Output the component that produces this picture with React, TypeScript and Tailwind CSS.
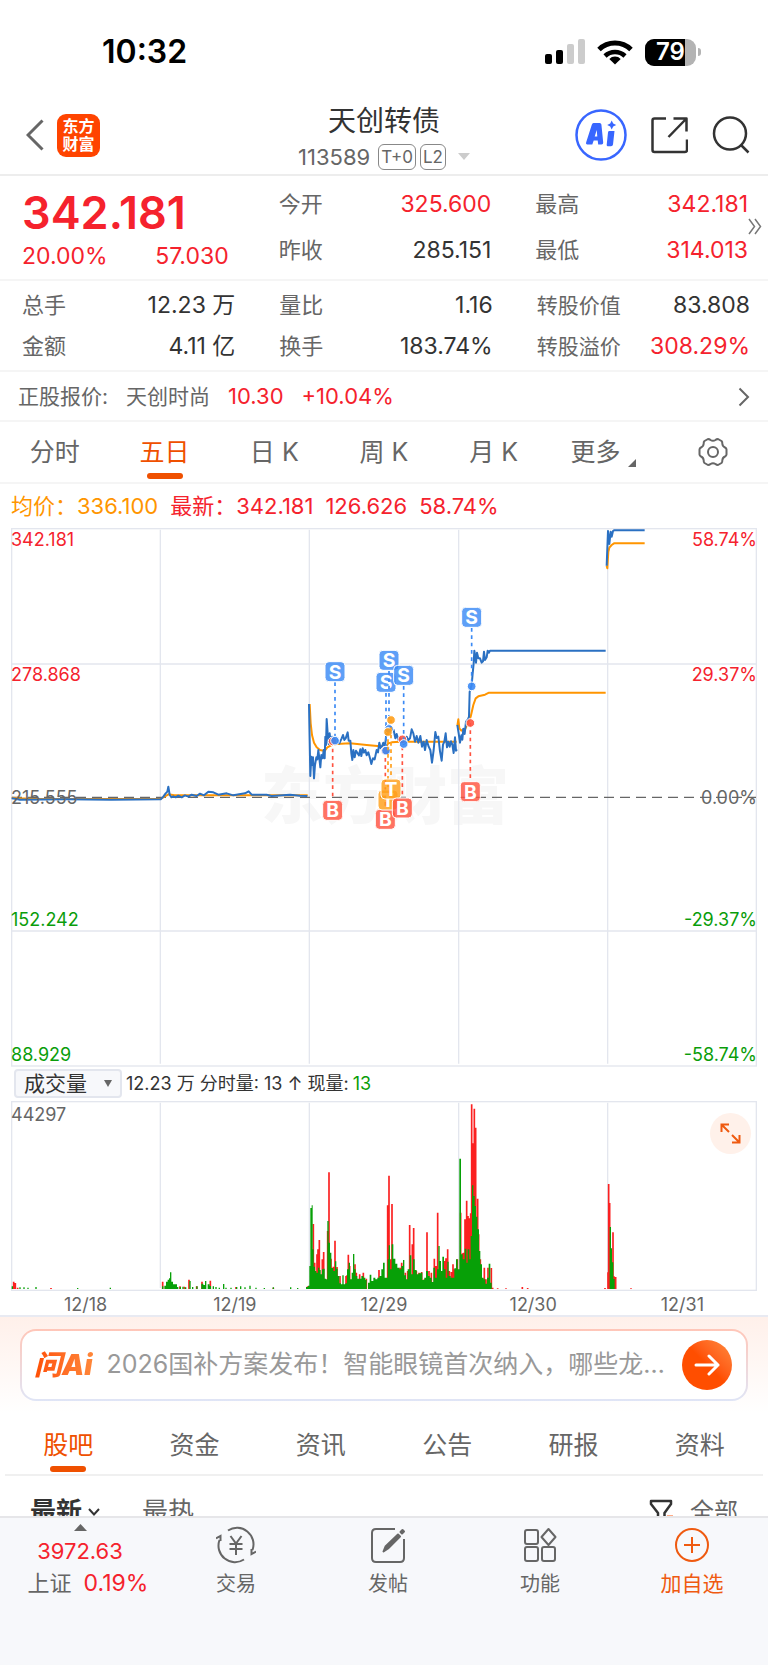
import React, { useState } from 'react';

interface Quote {
  label: string;
  value: string;
  up?: boolean;
}

interface Marker {
  kind: 'S' | 'B' | 'T';
  x: number;
  y: number;
  dotY: number;
}

type Point = [number, number];

const topQuotes: Quote[] = [
  { label: '今开', value: '325.600', up: true },
  { label: '最高', value: '342.181', up: true },
  { label: '昨收', value: '285.151' },
  { label: '最低', value: '314.013', up: true },
];

const moreQuotes: Quote[] = [
  { label: '总手', value: '12.23 万' },
  { label: '量比', value: '1.16' },
  { label: '转股价值', value: '83.808' },
  { label: '金额', value: '4.11 亿' },
  { label: '换手', value: '183.74%' },
  { label: '转股溢价', value: '308.29%', up: true },
];

const periods = ['分时', '五日', '日 K', '周 K', '月 K', '更多'];
const sections = ['股吧', '资金', '资讯', '公告', '研报', '资料'];
const dates = ['12/18', '12/19', '12/29', '12/30', '12/31'];

const scaleLabels = [
  { price: '342.181', percent: '58.74%', className: 'top-0 text-[#f5222d]' },
  { price: '278.868', percent: '29.37%', className: 'top-[25%] text-[#f5222d]' },
  { price: '215.555', percent: '0.00%', className: 'top-1/2 -translate-y-1/2 text-[#666]' },
  { price: '152.242', percent: '-29.37%', className: 'bottom-[25%] text-[#0a9d0a]' },
  { price: '88.929', percent: '-58.74%', className: 'bottom-0 text-[#0a9d0a]' },
];

// one polyline per trading day, in chart units (three per pixel)
const priceLines = [
  '2,811 12,812 27,815 167,814 300,815 449,814 457,806 464,796 469,791 472,776 476,800 481,808 487,805 494,808 502,803 512,808 522,802 532,806 542,800 557,804 567,797 579,802 592,791 607,793 622,800 647,796 667,802 702,796 713,790 722,800 767,800 782,804 837,800 867,803 889,804',
  '894,528 896,636 898,744 901,686 904,711 906,688 909,751 912,711 916,688 919,694 922,666 925,691 928,718 931,681 935,691 938,666 941,691 943,626 945,651 947,573 950,616 953,648 956,616 959,644 963,626 966,648 970,631 974,644 978,636 985,646 992,631 996,621 1000,636 1004,631 1010,613 1013,638 1018,638 1021,676 1024,696 1027,666 1031,688 1035,668 1040,676 1044,682 1048,664 1051,684 1055,661 1059,674 1063,666 1067,682 1072,673 1077,691 1081,708 1086,691 1091,694 1097,666 1101,673 1105,644 1109,661 1113,656 1117,644 1121,666 1125,626 1129,616 1135,601 1139,596 1143,611 1148,606 1153,631 1157,618 1162,636 1167,631 1173,636 1178,648 1183,644 1187,626 1192,636 1197,631 1202,604 1207,616 1212,641 1217,624 1222,644 1228,624 1233,656 1238,641 1242,666 1247,636 1253,656 1258,666 1263,704 1268,666 1273,612 1277,630 1282,626 1287,670 1292,698 1296,650 1300,641 1304,616 1308,658 1312,641 1316,656 1320,640 1324,650 1328,675 1332,628 1335,668 1338,664',
  '1339,591 1343,616 1347,644 1351,622 1354,635 1357,602 1361,618 1365,581 1371,574 1374,566 1376,491 1379,481 1382,471 1385,436 1388,406 1390,368 1393,386 1395,404 1398,374 1402,391 1407,391 1412,404 1416,400 1419,371 1422,396 1427,388 1430,368 1434,374 1437,368 1784,368',
  '1787,113 1791,9 1795,48 1799,11 1802,26 1806,9 1809,7 1901,7',
];

const averageLines = [
  '2,809 27,811 67,813 449,813 472,799 490,802 890,802',
  '896,528 899,586 903,621 909,644 917,658 927,666 941,669 949,658 962,651 977,648 1017,646 1067,651 1107,655 1127,654 1132,646 1142,643 1167,641 1337,641',
  '1339,594 1342,574 1345,601 1351,608 1362,604 1371,586 1379,566 1387,531 1394,511 1402,505 1422,500 1434,494 1784,494',
  '1787,113 1789,121 1792,71 1795,59 1802,51 1809,46 1901,46',
];

const markers: Marker[] = [
  { kind: 'B', x: 965, y: 847, dotY: 640 },
  { kind: 'S', x: 972, y: 431, dotY: 638 },
  { kind: 'B', x: 1123, y: 874, dotY: 668 },
  { kind: 'S', x: 1125, y: 463, dotY: 668 },
  { kind: 'S', x: 1134, y: 397, dotY: 603 },
  { kind: 'T', x: 1131, y: 816, dotY: 612 },
  { kind: 'T', x: 1140, y: 783, dotY: 576 },
  { kind: 'B', x: 1174, y: 840, dotY: 634 },
  { kind: 'S', x: 1178, y: 442, dotY: 648 },
  { kind: 'S', x: 1382, y: 268, dotY: 475 },
  { kind: 'B', x: 1378, y: 791, dotY: 585 },
];

const markerColors = { S: '#3b8af5', B: '#ff5340', T: '#ff9f1a' };

// [x, height] pairs of the minute volume bars
const greenBars: Point[] = [
  [4, 8], [27, 5], [39, 5], [51, 4], [75, 6], [200, 3], [298, 4], [455, 8], [462, 10], [467, 22], [472, 28], [476, 32], [479, 50], [483, 22],
  [488, 14], [494, 14], [500, 6], [508, 6], [516, 7], [524, 5], [537, 24], [545, 6], [558, 8], [573, 16], [579, 12], [584, 24], [592, 14],
  [598, 9], [607, 8], [615, 6], [625, 4], [638, 15], [645, 4], [660, 4], [677, 6], [689, 8], [702, 5], [717, 10], [735, 4], [760, 3], [787, 5],
  [839, 5], [860, 3], [887, 6], [893, 10], [897, 69], [900, 243], [904, 251], [907, 119], [910, 67], [914, 54], [918, 49], [923, 64], [927, 57],
  [931, 44], [935, 59], [939, 61], [943, 31], [947, 29], [951, 204], [955, 139], [959, 109], [963, 63], [969, 54], [974, 83], [978, 61],
  [982, 39], [987, 17], [992, 14], [996, 41], [1000, 14], [1005, 17], [1010, 59], [1015, 79], [1019, 29], [1024, 49], [1028, 105], [1032, 59],
  [1036, 39], [1041, 31], [1047, 31], [1053, 39], [1059, 34], [1065, 27], [1073, 19], [1078, 43], [1083, 24], [1089, 34], [1095, 29],
  [1101, 34], [1107, 39], [1113, 59], [1118, 79], [1123, 34], [1128, 34], [1132, 89], [1135, 131], [1139, 59], [1144, 134], [1149, 91],
  [1155, 76], [1161, 64], [1167, 59], [1173, 69], [1178, 87], [1182, 41], [1187, 29], [1192, 59], [1198, 101], [1203, 44], [1208, 89],
  [1213, 57], [1219, 44], [1225, 47], [1231, 49], [1236, 27], [1242, 34], [1247, 54], [1253, 39], [1258, 34], [1264, 21], [1269, 64],
  [1274, 34], [1280, 59], [1284, 129], [1288, 84], [1292, 54], [1296, 97], [1301, 59], [1306, 34], [1311, 82], [1315, 39], [1321, 34],
  [1327, 34], [1332, 62], [1337, 89], [1342, 59], [1347, 391], [1352, 104], [1357, 89], [1363, 121], [1368, 79], [1372, 119], [1377, 89],
  [1381, 159], [1385, 311], [1389, 279], [1393, 249], [1397, 217], [1401, 179], [1406, 114], [1410, 74], [1415, 34], [1420, 29],
  [1425, 16], [1430, 34], [1435, 76], [1440, 19], [1798, 186], [1802, 122], [1805, 80], [1809, 30],
];

const redBars: Point[] = [
  [8, 22], [13, 18], [20, 4], [120, 3], [455, 22], [507, 8], [520, 7], [534, 28], [557, 8], [573, 22], [598, 25], [675, 6], [787, 4], [890, 8],
  [907, 195], [911, 79], [918, 104], [921, 119], [925, 147], [934, 89], [938, 111], [950, 174], [954, 350], [960, 91], [967, 67],
  [972, 145], [978, 66], [987, 39], [1005, 39], [1008, 41], [1012, 103], [1016, 69], [1032, 74], [1036, 49], [1046, 44], [1057, 49],
  [1066, 31], [1104, 57], [1110, 39], [1130, 251], [1134, 340], [1139, 89], [1143, 255], [1161, 54], [1167, 64], [1172, 79], [1183, 49],
  [1190, 54], [1196, 192], [1204, 134], [1208, 183], [1216, 54], [1224, 49], [1232, 51], [1240, 29], [1248, 170], [1254, 54], [1261, 49],
  [1270, 91], [1275, 69], [1280, 229], [1300, 84], [1305, 92], [1310, 119], [1315, 54], [1321, 51], [1326, 74], [1331, 59], [1339, 89],
  [1349, 229], [1355, 107], [1358, 109], [1362, 209], [1367, 265], [1371, 219], [1375, 212], [1379, 227], [1382, 554], [1385, 437],
  [1390, 541], [1394, 484], [1400, 271], [1403, 164], [1408, 89], [1420, 64], [1425, 29], [1431, 64], [1441, 63], [1445, 4], [1460, 2],
  [1485, 2], [1534, 6], [1550, 3], [1782, 3], [1791, 50], [1793, 315], [1796, 258], [1806, 170], [1809, 38], [1814, 36], [1860, 2],
];

const toBars = (bars: Point[]) => bars.map(([x, h]) => `M${x} 564v-${h}`).join('');

// the green bars sit edge to edge, so fill each one up to its neighbour
const toArea = (bars: Point[]) =>
  bars
    .map(([x, h], i) => {
      const next = bars[i + 1];
      const width = next && next[0] - x <= 6 ? next[0] - x : 4;
      return `M${x - 2} 564v-${h}h${width}v${h}z`;
    })
    .join('');

const StatusBar: React.FC = () => (
  <div className="flex h-24 items-center justify-between pl-[102px] pr-[67px] pt-2 text-black">
    <span className="text-[32px] font-semibold">10:32</span>
    <div className="flex items-center">
      <svg width="40" height="26" viewBox="0 0 40 26">
        <rect x="0" y="15" width="7" height="10" rx="2" />
        <rect x="11" y="11" width="7" height="14" rx="2" />
        <rect x="22" y="5" width="7" height="20" rx="2" fill="#ccc" />
        <rect x="33" y="0" width="7" height="25" rx="2" fill="#ccc" />
      </svg>
      <svg className="ml-3" width="36" height="26" viewBox="0 0 36 26" fill="none" stroke="#000" strokeWidth="5">
        <path d="M2 10.5a23 23 0 0 1 32 0" />
        <path d="M8 17a14.500 14.500 0 0 1 20 0" strokeWidth="4.500" />
        <path d="M18 25.500 12.300 20a8 8 0 0 1 11.400 0z" fill="#000" stroke="none" />
      </svg>
      <div className="relative ml-3 flex h-[27px] w-[51px] items-center justify-center overflow-hidden rounded-[9px] bg-[#b3b3b3]">
        <div className="absolute inset-y-0 left-0 w-10 bg-black" />
        <span className="relative text-2xl font-semibold leading-none text-white">79</span>
      </div>
      <div className="ml-0.5 h-2 w-[3px] rounded-r-full bg-[#b3b3b3]" />
    </div>
  </div>
);

const Header: React.FC = () => (
  <header className="flex h-20 items-center border-b-2 border-[#ededed] px-[18px]">
    <div className="flex flex-1 items-center">
      <button aria-label="返回" className="px-2">
        <svg width="18" height="32" viewBox="0 0 18 32" fill="none" stroke="#666" strokeWidth="3">
          <path d="M16.500 1.500 2 16l14.500 14.500" />
        </svg>
      </button>
      <div className="ml-[5px] grid h-[43px] w-[43px] place-content-center rounded-[9px] bg-[#ff4400] text-center text-base font-bold leading-[18px] text-white">
        <span>东方</span>
        <span>财富</span>
      </div>
    </div>
    <div className="flex flex-col items-center pt-[7px]">
      <h1 className="text-[28px] leading-9 text-[#333]">天创转债</h1>
      <button className="flex items-center text-[22px] leading-9 text-[#666]">
        113589
        <span className="ml-2 rounded-md border border-[#888] px-0.5 text-[17px] leading-6">T+0</span>
        <span className="ml-1 rounded-md border border-[#888] px-0.5 text-[17px] leading-6">L2</span>
        <svg className="ml-3" width="12" height="7" viewBox="0 0 12 7">
          <path d="M0 0h12L6 7z" fill="#ccc" />
        </svg>
      </button>
    </div>
    <div className="flex flex-1 items-center justify-end">
      <button aria-label="Ai">
        <svg width="52" height="52" viewBox="0 0 52 52" fill="#3866ff">
          <circle cx="26" cy="26" r="24.500" fill="#fff" stroke="#3866ff" strokeWidth="2.500" />
          <path d="M18.500 14h6.200q1.500 0 1.700 1.500l1.800 18q.1 2-1.700 2h-3.300l-.5-4h-4l-1.400 4h-5q-1.800 0-1.200-2l5.700-17.700Q17.300 14 18.500 14zm3.200 7-2 6.500h2.600z" fillRule="evenodd" />
          <path d="M34 22h5.500L38 35.500q-.2 1.800-2 1.800h-3q-1.500 0-1.300-1.600L33 23.500q.1-1.500 1-1.500z" />
          <path d="m36.700 11.500 1.500 3 3 1.500-3 1.500-1.500 3-1.500-3-3-1.500 3-1.500z" />
        </svg>
      </button>
      <button aria-label="分享" className="ml-6">
        <svg width="37" height="37" viewBox="0 0 37 37" fill="none" stroke="#333" strokeWidth="2.500" strokeLinejoin="round">
          <path d="M15 1.500H3.500q-2 0-2 2V33q0 2 2 2H34q2 0 2-2V22.500M22.500 1.500h13v13M35 2 17.500 20" />
        </svg>
      </button>
      <button aria-label="搜索" className="ml-6">
        <svg width="38" height="38" viewBox="0 0 38 38" fill="none" stroke="#333" strokeWidth="2.500">
          <circle cx="18" cy="17.500" r="16" />
          <path d="m29 29 7.500 7.500" />
        </svg>
      </button>
    </div>
  </header>
);

const QuoteItem: React.FC<{ quote: Quote }> = ({ quote }) => (
  <div className="flex items-center justify-between whitespace-nowrap">
    <span className={`text-[#666] ${quote.label.length > 2 ? 'text-[21px]' : 'text-[22px]'}`}>{quote.label}</span>
    <span className={quote.up ? 'text-[#f5222d]' : 'text-[#333]'}>{quote.value}</span>
  </div>
);

const QuotePanel: React.FC = () => (
  <section className="text-[23px]">
    <div className="relative grid grid-cols-3 gap-x-11 border-b-2 border-[#f5f5f5] pb-1.5 pl-[22px] pr-5 pt-[5px] text-[#f5222d]">
      <div>
        <div className="pt-1.5 text-[45px] font-semibold leading-[52px]">342.181</div>
        <div className="flex justify-between pr-1.5 leading-[34px]">
          <span>20.00%</span>
          <span>57.030</span>
        </div>
      </div>
      <div className="col-span-2 grid grid-cols-2 gap-x-11 leading-[46px]">
        {topQuotes.map((quote) => (
          <QuoteItem key={quote.label} quote={quote} />
        ))}
      </div>
      <button aria-label="展开" className="absolute right-1.5 top-[42px]">
        <svg width="14" height="17" viewBox="0 0 14 17" fill="none" stroke="#777" strokeWidth="1.500">
          <path d="m1 1 5.500 7.500L1 16M7 1l5.500 7.500L7 16" />
        </svg>
      </button>
    </div>
    <div className="grid grid-cols-3 gap-x-11 border-b-2 border-[#f5f5f5] pb-[3px] pl-[22px] pr-[18px] pt-1 leading-[41px]">
      {moreQuotes.map((quote) => (
        <QuoteItem key={quote.label} quote={quote} />
      ))}
    </div>
    <a href="#stock" className="flex h-[50px] items-center border-b-2 border-[#f5f5f5] px-[18px] pt-px text-[22px] text-[#f5222d]">
      <span className="text-[21px] text-[#666]">正股报价:</span>
      <span className="ml-[18px] text-[21px] text-[#666]">天创时尚</span>
      <span className="ml-[18px]">10.30</span>
      <span className="ml-[18px]">+10.04%</span>
      <svg className="ml-auto" width="12" height="20" viewBox="0 0 12 20" fill="none" stroke="#666" strokeWidth="2">
        <path d="m1.500 1.500 8.500 8.500-8.500 8.500" />
      </svg>
    </a>
  </section>
);

const PriceChart: React.FC = () => (
  <div className="relative mx-[11px] text-lg leading-6">
    <svg className="block w-full" viewBox="0 0 2238 1617" fill="none">
      <text x="1122" y="873" textAnchor="middle" fontSize="186" fontWeight="900" fill="#f7f7f7">东方财富</text>
      <g stroke="#e3e6ee" strokeWidth="4">
        <rect x="2" y="2" width="2234" height="1612" />
        <path d="M448 5V1607M895 5V1607M1343 5V1607M1790 5V1607M3 408H2235M3 1209H2235" />
      </g>
      <path d="M3 808H2235" stroke="#666" strokeWidth="4" strokeDasharray="30 18" />
      {averageLines.map((points) => (
        <polyline key={points} points={points} stroke="#ff9500" strokeWidth="6" strokeLinejoin="round" />
      ))}
      {priceLines.map((points) => (
        <polyline key={points} points={points} stroke="#2a70c2" strokeWidth="6" strokeLinejoin="round" />
      ))}
      {markers.map(({ kind, x, y, dotY }) => (
        <g key={`${kind}${x}`} fill={markerColors[kind]}>
          <path
            d={kind === 'S' ? `M${x} ${y + 32}V${dotY}` : `M${x} ${dotY}V${y - 30}`}
            stroke={markerColors[kind]}
            strokeWidth="5"
            strokeDasharray="11 11"
          />
          <circle cx={x} cy={dotY} r="13" stroke="#fff" strokeWidth="3" fillOpacity="0.9" />
          <rect x={x - 30} y={y - 30} width="60" height="60" rx="12" stroke="#fff" strokeWidth="3" fillOpacity="0.82" />
          <text x={x} y={y + 21} textAnchor="middle" fontSize="58" fontWeight="700" fill="#fff">{kind}</text>
        </g>
      ))}
    </svg>
    {scaleLabels.map(({ price, percent, className }) => (
      <div key={price} className={`absolute inset-x-0 flex justify-between ${className}`}>
        <span>{price}</span>
        <span>{percent}</span>
      </div>
    ))}
  </div>
);

const VolumeChart: React.FC = () => (
  <div className="px-[11px] text-lg text-[#666]">
    <div className="relative">
      <svg className="block w-full" viewBox="0 0 2238 570" fill="none">
        <g stroke="#e3e6ee" strokeWidth="4">
          <rect x="2" y="2" width="2234" height="566" />
          <path d="M448 5V561M895 5V561M1343 5V561M1790 5V561" />
        </g>
        <path d={toBars(redBars)} stroke="#fb2020" strokeWidth="5" />
        <path d={toArea(greenBars)} fill="#07a007" />
      </svg>
      <span className="absolute left-0 top-0.5 leading-6">44297</span>
      <button aria-label="全屏" className="absolute right-1.5 top-3 rounded-full bg-[#fff1ea] p-2.5">
        <svg width="21" height="21" viewBox="0 0 21 21" fill="none" stroke="#ef5a10" strokeWidth="2">
          <path d="M9 1.500H1.500V9M1.500 1.500 9 9M12 19.500h7.500V12M19.500 19.500 12 12" />
        </svg>
      </button>
    </div>
    <div className="grid h-6 grid-cols-5 items-center text-center">
      {dates.map((date) => (
        <span key={date}>{date}</span>
      ))}
    </div>
  </div>
);

const AskBar: React.FC = () => (
  <div className="border-t-2 border-[#e8eaf2] bg-gradient-to-b from-[#fff0ea] to-white px-5 pb-3 pt-3">
    <div className="rounded-2xl bg-gradient-to-b from-[#ffc6b8] to-[#dfe5f6] p-0.5">
      <form className="flex h-[68px] items-center rounded-[14px] bg-white pl-3 pr-3.5" onSubmit={(e) => e.preventDefault()}>
        <span className="bg-gradient-to-r from-[#ff4e00] to-[#ff8a3c] bg-clip-text pr-1 text-[28px] font-black italic text-transparent">
          问Ai
        </span>
        <input
          type="text"
          aria-label="问Ai"
          placeholder="2026国补方案发布！智能眼镜首次纳入，哪些龙头股受益"
          className="ml-2.5 mr-3.5 min-w-0 flex-1 text-ellipsis text-[25px] outline-none placeholder:text-[#999]"
        />
        <button aria-label="发送" className="grid h-[50px] w-[50px] place-content-center rounded-full bg-gradient-to-tr from-[#ff4e00] from-50% to-[#ff8a3c]">
          <svg width="26" height="22" viewBox="0 0 26 22" fill="none" stroke="#fff" strokeWidth="3" strokeLinecap="round" strokeLinejoin="round">
            <path d="M2 11h22M15 2l9 9-9 9" />
          </svg>
        </button>
      </form>
    </div>
  </div>
);

const BottomNav: React.FC = () => (
  <nav className="flex h-[149px] items-start border-t-2 border-[#e6e6e9] bg-[#f7f8fb] text-xl text-[#666]">
    <button className="flex w-40 flex-col items-center pt-1.5 text-[22px] text-[#f5222d]">
      <svg width="13" height="7" viewBox="0 0 13 7">
        <path d="M0 7h13L6.500 0z" fill="#666" />
      </svg>
      <span className="leading-10">3972.63</span>
      <span className="flex gap-3 pl-4 text-[23px] leading-6">
        <span className="text-[22px] text-[#666]">上证</span>
        0.19%
      </span>
    </button>
    <div className="grid flex-1 grid-cols-4">
      <button className="flex flex-col items-center gap-1.5 pt-2">
        <svg width="40" height="38" viewBox="0 0 40 38" fill="none" stroke="#666" strokeWidth="2">
          <path d="M12 4.500A16.500 16.500 0 0 1 36.500 24M28 33.500A16.500 16.500 0 0 1 3.500 14M0 12.500l4.500-2.500v5M40 25.500 35.500 28v-5" />
          <path d="m14.500 10 5.500 7.500 5.500-7.500M13.500 18h13M13.500 23h13M20 17.500V29" />
        </svg>
        <span>交易</span>
      </button>
      <button className="flex flex-col items-center gap-1.5 pt-2">
        <svg width="36" height="38" viewBox="0 0 36 38" fill="none" stroke="#666" strokeWidth="2">
          <path d="M25 3H6Q2 3 2 7v25q0 4 4 4h24q4 0 4-4V13" />
          <path d="m13.500 25.500 2-5L28 8.500l2 2L18 22.500zM30.500 6l2-2 1.500 1.500-2 2z" fill="#666" strokeLinejoin="round" />
        </svg>
        <span>发帖</span>
      </button>
      <button className="flex flex-col items-center gap-1.5 pt-2">
        <svg width="34" height="38" viewBox="0 0 34 38" fill="none" stroke="#666" strokeWidth="2" strokeLinejoin="round">
          <rect x="2" y="4" width="13" height="14" rx="2" />
          <rect x="2" y="21" width="13" height="14" rx="2" />
          <rect x="19" y="21" width="13" height="14" rx="2" />
          <path d="m25.500 3 7 8-7 8-7-8z" />
        </svg>
        <span>功能</span>
      </button>
      <button className="flex flex-col items-center gap-1.5 pt-2 text-[21px] leading-7 text-[#ef5a10]">
        <svg width="36" height="38" viewBox="0 0 36 38" fill="none" stroke="currentColor" strokeWidth="2">
          <circle cx="18" cy="19" r="16" />
          <path d="M10 19h16M18 11v16" />
        </svg>
        <span>加自选</span>
      </button>
    </div>
  </nav>
);

const App: React.FC = () => {
  const [period, setPeriod] = useState('五日');
  const [section, setSection] = useState('股吧');

  return (
    <div className="bg-white font-[Inter,'Noto_Sans_CJK_SC',sans-serif]">
      <StatusBar />
      <Header />
      <QuotePanel />

      <div className="grid h-[62px] grid-cols-7 border-b-2 border-[#f5f5f5] text-[25px] text-[#666]">
        {periods.map((name) => (
          <button
            key={name}
            onClick={() => setPeriod(name)}
            className={`relative flex items-center justify-center pt-0.5 ${name === period ? 'text-[#ef5000]' : ''}`}
          >
            {name}
            {name === '更多' && (
              <svg className="ml-2 mt-5" width="8" height="8" viewBox="0 0 8 8">
                <path d="M8 0v8H0z" fill="#666" />
              </svg>
            )}
            {name === period && <span className="absolute bottom-[3px] h-1.5 w-9 rounded-full bg-[#ef5000]" />}
          </button>
        ))}
        <button aria-label="设置" className="grid place-content-center">
          <svg width="30" height="30" viewBox="0 0 30 30" fill="none" stroke="#666" strokeWidth="2" strokeLinejoin="round">
            <path d="M10 2q1.500 0 2.500 1 2.500 1.500 5 0 1-1 2.500-1l3.500 2q1 1 .8 2.500.2 3 2.700 4 1.500.8 1.500 2v5q0 1.200-1.500 2-2.500 1-2.700 4 .2 1.500-.8 2.500L20 28q-1.500 0-2.500-1-2.500-1.500-5 0-1 1-2.500 1l-3.500-2q-1-1-.8-2.500-.2-3-2.700-4-1.500-.8-1.500-2v-5q0-1.200 1.500-2 2.500-1 2.700-4Q5.500 5 6.500 4z" />
            <circle cx="15" cy="15" r="5" />
          </svg>
        </button>
      </div>

      <div className="flex h-11 items-center gap-3 px-[11px] text-[22px] text-[#f5222d]">
        <span className="text-[#ff9500]">均价：336.100</span>
        <span>最新：342.181</span>
        <span>126.626</span>
        <span>58.74%</span>
      </div>

      <PriceChart />

      <div className="flex h-[34px] items-center gap-1 px-3.5 text-lg text-[#333]">
        <div className="relative">
          <select
            aria-label="指标"
            className="h-[29px] w-[108px] appearance-none rounded border-2 border-[#e3e6ee] bg-[#f7f8fb] pl-2 text-[21px] leading-6"
          >
            <option>成交量</option>
            <option>成交额</option>
          </select>
          <svg className="pointer-events-none absolute right-2.5 top-[11px]" width="8" height="7" viewBox="0 0 8 7">
            <path d="M0 0h8L4 7z" fill="#666" />
          </svg>
        </div>
        <span>12.23 万 分时量: 13 ↑ 现量:</span>
        <span className="text-[#0a9d0a]">13</span>
      </div>

      <VolumeChart />
      <AskBar />

      <div className="mx-[5px] grid h-[63px] grid-cols-6 border-b-2 border-[#f0f0f0] text-[25px] text-[#666]">
        {sections.map((name) => (
          <button
            key={name}
            onClick={() => setSection(name)}
            className={`relative flex items-center justify-center pt-1 ${name === section ? 'text-[#ef5000]' : ''}`}
          >
            {name}
            {name === section && <span className="absolute bottom-0.5 h-1.5 w-9 rounded-full bg-[#ef5000]" />}
          </button>
        ))}
      </div>

      <div className="flex h-10 items-start overflow-hidden px-[30px] pt-4 text-[26px] leading-10 text-[#666]">
        <button className="flex items-center font-bold text-[#333]">
          最新
          <svg className="ml-1.5" width="12" height="8" viewBox="0 0 12 8" fill="none" stroke="#333" strokeWidth="2">
            <path d="m1 1 5 5.500L11 1" />
          </svg>
        </button>
        <button className="ml-[42px]">最热</button>
        <button className="ml-auto flex items-center gap-4 text-2xl leading-10">
          <svg width="25" height="26" viewBox="0 0 25 26" fill="none" stroke="#333" strokeWidth="2.500" strokeLinejoin="round">
            <path d="M2 2h20v3l-6.500 9v9L9 20v-6L2 5z" />
            <path d="M18 18h6" stroke="#ff5a10" strokeWidth="3" />
          </svg>
          全部
        </button>
      </div>

      <BottomNav />
    </div>
  );
};

export default App;
